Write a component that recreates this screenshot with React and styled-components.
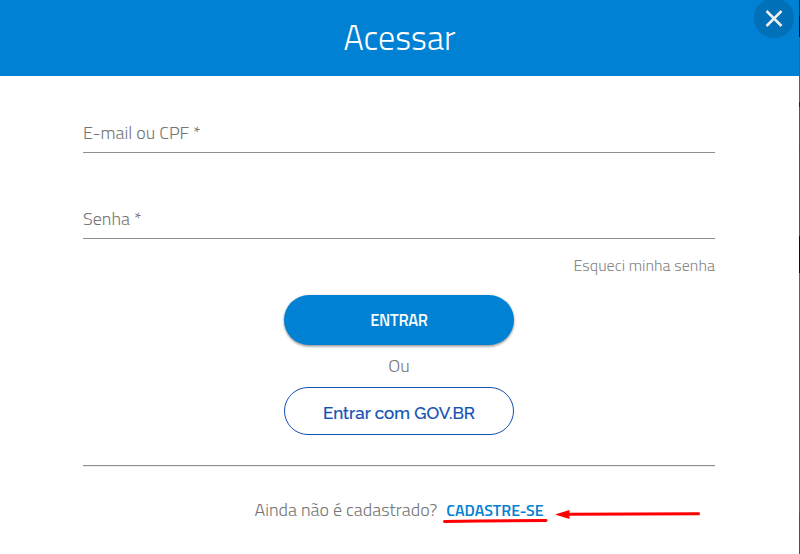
import React from 'react';
import styled, { createGlobalStyle } from 'styled-components';

const GlobalStyle = createGlobalStyle`
  * { box-sizing: border-box; }
  body { margin: 0; background: #fff; font-family: "Titillium Web", Roboto, "Liberation Sans", sans-serif; font-weight: 300; }
`;

const Page = styled.div`
  display: grid;
  grid-template-columns: 799px 1px;
  width: 800px;
  height: 554px;
  overflow: hidden;
`;

const Dialog = styled.main`
  position: relative;
  background: #fff;
`;

const Backdrop = styled.div`
  background: linear-gradient(
    #2b3540 0 16px, #10161d 16px 37px, #68594f 37px 102px, #1c242b 102px 107px,
    #4a5a64 107px 140px, #6a4a2c 140px 146px, #46545e 146px 236px, #0b0b0d 236px 273px,
    #5f6163 273px 513px, #7a4310 513px
  );
`;

const Header = styled.header`
  display: flex;
  justify-content: center;
  height: 76px;
  background: #0081d3;
`;

const Title = styled.h1`
  margin: 0;
  color: #fff;
  font-size: 34.1px;
  font-weight: 300;
  line-height: 74px;
`;

const CloseButton = styled.button`
  position: absolute;
  top: -2px;
  right: 5px;
  display: grid;
  place-items: center;
  width: 40px;
  height: 40px;
  padding: 0;
  border: 0;
  border-radius: 50%;
  background: #0071b9;
`;

const Form = styled.form`
  width: 632px;
  margin-left: 83px;
  display: flex;
  flex-direction: column;
  align-items: center;
`;

const Field = styled.label`
  width: 100%;
  height: ${(p) => p.$height}px;
  padding-bottom: 8px;
  display: flex;
  align-items: flex-end;
  border-bottom: 1px solid #8f8f8f;
  color: #757575;
  font-size: 18px;
  line-height: 23px;
`;

const Forgot = styled.a`
  align-self: flex-end;
  height: 24px;
  margin-top: 14px;
  color: #858585;
  font-size: 16px;
  line-height: 24px;
  letter-spacing: 0.05px;
  white-space: nowrap;
`;

const Button = styled.button`
  width: 230px;
  padding: 0;
  border-radius: 26px;
  white-space: nowrap;
`;

const Submit = styled(Button)`
  height: 50px;
  margin-top: 18px;
  border: 0;
  background: #0081d3;
  color: #f4f9fd;
  font: 600 16.5px/50px "Titillium Web", Roboto, sans-serif;
  letter-spacing: -0.3px;
  box-shadow: 0 1px 3px rgba(0, 0, 0, .35), 0 2px 2px rgba(0, 0, 0, .14);
`;

const Or = styled.span`
  height: 42px;
  color: #757575;
  font-size: 18px;
  line-height: 42px;
`;

const GovButton = styled(Button)`
  height: 48px;
  border: 1px solid #1351b4;
  background: #fff;
  color: #1351b4;
  font: 500 17px/50px Raleway, Lato, sans-serif;
  -webkit-text-stroke: 0.2px #1351b4;
`;

const Rule = styled.hr`
  width: 100%;
  height: 2px;
  margin: 30px 0 0;
  border: 0;
  border-top: 1px solid #8f8f8f;
  background: #ededed;
`;

const SignUp = styled.div`
  align-self: flex-start;
  display: flex;
  align-items: flex-end;
  gap: 9px;
  margin: 31px 0 0 171.5px;
  color: #757575;
  font-size: 18px;
  line-height: 23px;
  white-space: nowrap;
`;

const SignUpLink = styled.a`
  padding-top: 1px;
  margin-bottom: -1px;
  color: #0081d3;
  font-size: 16px;
  font-weight: 600;
`;

const Annotation = styled.svg`
  position: absolute;
  left: 440px;
  top: 500px;
  pointer-events: none;
`;

export default function App() {
  return (
    <>
      <GlobalStyle />
      <Page>
        <Dialog>
          <Header><Title>Acessar</Title></Header>
          <CloseButton type="button" aria-label="Fechar">
            <svg width="18" height="18" viewBox="0 0 18 18">
              <path d="M1.5 2 16.5 17M16.5 2 1.5 17" stroke="#eee" strokeWidth="2.5" />
            </svg>
          </CloseButton>
          <Form>
            <Field $height={77}><span>E-mail ou CPF *</span></Field>
            <Field $height={86}><span>Senha *</span></Field>
            <Forgot>Esqueci minha senha</Forgot>
            <Submit type="button">ENTRAR</Submit>
            <Or>Ou</Or>
            <GovButton type="button">Entrar com GOV.BR</GovButton>
            <Rule />
            <SignUp><span>Ainda não é cadastrado?</span><SignUpLink>CADASTRE-SE</SignUpLink></SignUp>
          </Form>
          <Annotation width="264" height="30" viewBox="0 0 264 30" fill="none" stroke="#f00" strokeLinecap="round">
            <path d="M4.5 21.5 38 21 106 20.5" strokeWidth="3" />
            <path d="M128 14.3 258.5 13.7" strokeWidth="3" />
            <path d="M115 14.5 129.5 10V19Z" fill="#f00" stroke="none" />
          </Annotation>
        </Dialog>
        <Backdrop />
      </Page>
    </>
  );
}
